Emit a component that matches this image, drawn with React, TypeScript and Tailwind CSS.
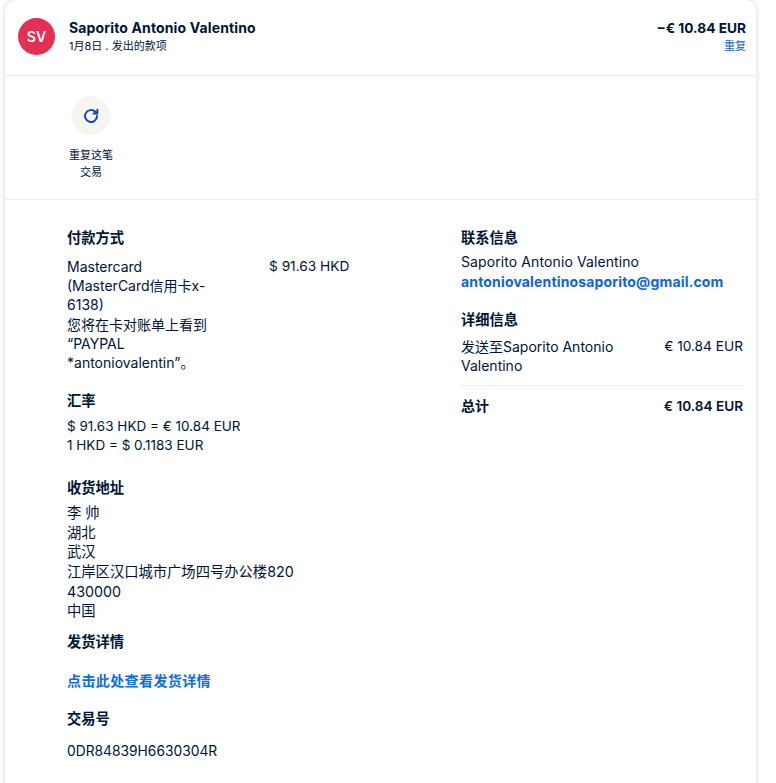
import React from 'react';

const font = { fontFamily: 'Inter, "Noto Sans CJK SC", sans-serif' };

function Heading({ children, className = '' }: { children: React.ReactNode; className?: string }) {
    return <h3 className={`text-[14.25px] leading-5 font-semibold text-[#001435] ${className}`}>{children}</h3>;
}

export default function App() {
    return (
        <div className="bg-white h-[783px] overflow-hidden text-[#001435]" style={font}>
            <div className="ml-1 -mt-px w-[753px] min-h-[800px] bg-white rounded-t-xl border-x border-t border-[#ececec] shadow-[0_0_5px_rgba(0,0,0,0.12)]">
                {/* Header */}
                <div className="h-[76px] flex items-start justify-between pl-[13px] pr-[10px] pt-[18px] border-b border-[#ececec]">
                    <div className="flex items-start">
                        <div className="w-[37px] h-[37px] rounded-full bg-[#e52f55] text-white text-[14px] font-semibold flex items-center justify-center">
                            SV
                        </div>
                        <div className="ml-[14px]">
                            <div className="text-[14px] leading-5 font-bold tracking-[0.14px]">Saporito Antonio Valentino</div>
                            <div className="text-[11px] leading-[14px] mt-px">1月8日 . 发出的款项</div>
                        </div>
                    </div>
                    <div className="text-right">
                        <div className="text-[13.7px] leading-5 font-bold">−€ 10.84 EUR</div>
                        <div className="text-[11px] leading-[14px] mt-px text-[#0a5fc4]">重复</div>
                    </div>
                </div>

                {/* Actions */}
                <div className="h-[124px] pl-[63px] pt-[20px] border-b border-[#ececec]">
                    <div className="w-[46px] flex flex-col items-center">
                        <div className="w-[38px] h-[39px] rounded-full bg-[#f7f5f2] flex items-center justify-center">
                            <svg width="18" height="18" viewBox="0 0 24 24" fill="none" stroke="#1546a0" strokeWidth="2.6" strokeLinecap="round" strokeLinejoin="round">
                                <path d="M20 12a8 8 0 1 1-2.6-5.9L20 8.5" />
                                <path d="M20.5 3.5v5.2h-5.2" />
                            </svg>
                        </div>
                        <div className="mt-[12px] text-[11px] leading-[17px] text-center">重复这笔交易</div>
                    </div>
                </div>

                {/* Details */}
                <div className="flex pl-[62px] pt-[28px]">
                    <div className="w-[394px]">
                        <Heading>付款方式</Heading>
                        <div className="mt-[9px] flex text-[14px] leading-[19.2px]">
                            <div className="w-[202px] shrink-0">
                                <div className="w-[146px]">Mastercard (MasterCard信用卡x-6138)</div>
                                <div className="w-[150px]">您将在卡对账单上看到 “PAYPAL *antoniovalentin”。</div>
                            </div>
                            <div className="text-[13.7px]">$ 91.63 HKD</div>
                        </div>

                        <Heading className="mt-[19px]">汇率</Heading>
                        <div className="mt-[6px] text-[13.5px] leading-[19px]">
                            <div>$ 91.63 HKD = € 10.84 EUR</div>
                            <div>1 HKD = $ 0.1183 EUR</div>
                        </div>

                        <Heading className="mt-[23px]">收货地址</Heading>
                        <div className="mt-[5px] text-[14.3px] leading-[19.6px]">
                            <div>李 帅</div>
                            <div>湖北</div>
                            <div>武汉</div>
                            <div>江岸区汉口城市广场四号办公楼820</div>
                            <div>430000</div>
                            <div>中国</div>
                        </div>

                        <Heading className="mt-[11px]">发货详情</Heading>
                        <div className="mt-[19px] text-[14px] leading-5 font-semibold tracking-[0.4px] text-[#0a6ee0]">点击此处查看发货详情</div>

                        <Heading className="mt-[18px]">交易号</Heading>
                        <div className="mt-[12px] text-[13.8px] leading-5">0DR84839H6630304R</div>
                    </div>

                    <div className="w-[282px]">
                        <Heading>联系信息</Heading>
                        <div className="mt-[4px] text-[14px] leading-5 tracking-[0.1px]">Saporito Antonio Valentino</div>
                        <div className="text-[14px] leading-5 font-bold tracking-[0.16px] text-[#0f62e0]">antoniovalentinosaporito@gmail.com</div>

                        <Heading className="mt-[18px]">详细信息</Heading>
                        <div className="mt-[7px] flex justify-between text-[14px] leading-[19.2px] pb-[10px] border-b border-[#ececec]">
                            <div className="w-[170px]">发送至Saporito Antonio Valentino</div>
                            <div className="text-[13.7px]">€ 10.84 EUR</div>
                        </div>
                        <div className="mt-[10px] flex justify-between text-[14px] leading-5 font-semibold">
                            <div>总计</div>
                            <div className="text-[13.6px]">€ 10.84 EUR</div>
                        </div>
                    </div>
                </div>
            </div>
        </div>
    );
}
